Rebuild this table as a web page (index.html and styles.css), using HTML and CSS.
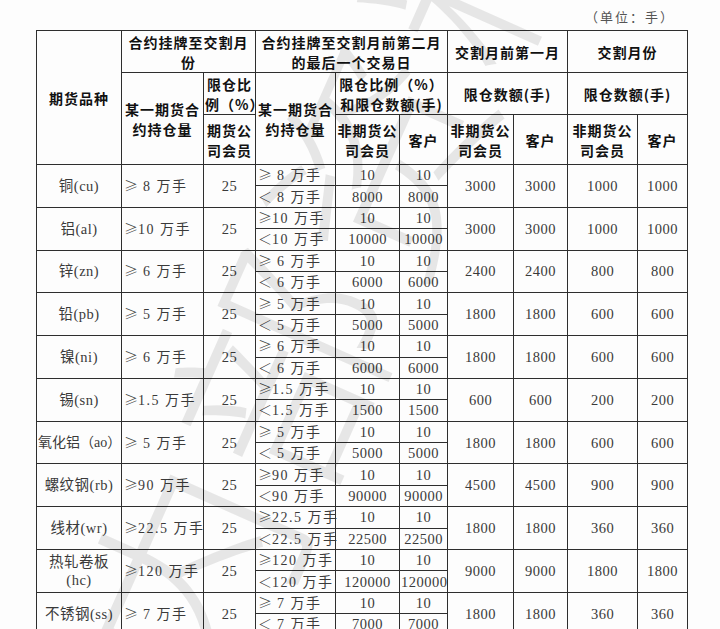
FILE: index.html
```html
<!DOCTYPE html>
<html lang="zh">
<head>
<meta charset="utf-8">
<link rel="stylesheet" href="styles.css">
</head>
<body>
<div class="page">
  <div class="unit">（单位：手）</div>
  <table class="limits">
    <colgroup>
      <col class="c1"><col class="c2"><col class="c3"><col class="c4"><col class="c5">
      <col class="c6"><col class="c7"><col class="c8"><col class="c9"><col class="c10">
    </colgroup>
    <thead>
      <tr class="h1">
        <th rowspan="3">期货品种</th>
        <th colspan="2">合约挂牌至交割月<br>份</th>
        <th colspan="3">合约挂牌至交割月前第二月<br>的最后一个交易日</th>
        <th colspan="2">交割月前第一月</th>
        <th colspan="2">交割月份</th>
      </tr>
      <tr class="h2">
        <th rowspan="2">某一期货合<br>约持仓量</th>
        <th>限仓比<br>例（%）</th>
        <th rowspan="2">某一期货合<br>约持仓量</th>
        <th colspan="2">限仓比例（%）<br>和限仓数额(手)</th>
        <th colspan="2">限仓数额(手)</th>
        <th colspan="2">限仓数额(手)</th>
      </tr>
      <tr class="h3">
        <th>期货公<br>司会员</th>
        <th>非期货公<br>司会员</th>
        <th>客户</th>
        <th>非期货公<br>司会员</th>
        <th>客户</th>
        <th>非期货公<br>司会员</th>
        <th>客户</th>
      </tr>
    </thead>
    <tbody>
      <tr><td rowspan="2">铜(cu)</td><td rowspan="2" class="l"><span class="op">≥</span> 8 万手</td><td rowspan="2">25</td><td class="l"><span class="op">≥</span> 8 万手</td><td>10</td><td>10</td><td rowspan="2">3000</td><td rowspan="2">3000</td><td rowspan="2">1000</td><td rowspan="2">1000</td></tr>
      <tr><td class="l"><span class="op">＜</span> 8 万手</td><td>8000</td><td>8000</td></tr>

      <tr><td rowspan="2">铝(al)</td><td rowspan="2" class="l"><span class="op">≥</span>10 万手</td><td rowspan="2">25</td><td class="l"><span class="op">≥</span>10 万手</td><td>10</td><td>10</td><td rowspan="2">3000</td><td rowspan="2">3000</td><td rowspan="2">1000</td><td rowspan="2">1000</td></tr>
      <tr><td class="l"><span class="op">＜</span>10 万手</td><td>10000</td><td>10000</td></tr>

      <tr><td rowspan="2">锌(zn)</td><td rowspan="2" class="l"><span class="op">≥</span> 6 万手</td><td rowspan="2">25</td><td class="l"><span class="op">≥</span> 6 万手</td><td>10</td><td>10</td><td rowspan="2">2400</td><td rowspan="2">2400</td><td rowspan="2">800</td><td rowspan="2">800</td></tr>
      <tr><td class="l"><span class="op">＜</span> 6 万手</td><td>6000</td><td>6000</td></tr>

      <tr><td rowspan="2">铅(pb)</td><td rowspan="2" class="l"><span class="op">≥</span> 5 万手</td><td rowspan="2">25</td><td class="l"><span class="op">≥</span> 5 万手</td><td>10</td><td>10</td><td rowspan="2">1800</td><td rowspan="2">1800</td><td rowspan="2">600</td><td rowspan="2">600</td></tr>
      <tr><td class="l"><span class="op">＜</span> 5 万手</td><td>5000</td><td>5000</td></tr>

      <tr><td rowspan="2">镍(ni)</td><td rowspan="2" class="l"><span class="op">≥</span> 6 万手</td><td rowspan="2">25</td><td class="l"><span class="op">≥</span> 6 万手</td><td>10</td><td>10</td><td rowspan="2">1800</td><td rowspan="2">1800</td><td rowspan="2">600</td><td rowspan="2">600</td></tr>
      <tr><td class="l"><span class="op">＜</span> 6 万手</td><td>6000</td><td>6000</td></tr>

      <tr><td rowspan="2">锡(sn)</td><td rowspan="2" class="l"><span class="op">≥</span>1.5 万手</td><td rowspan="2">25</td><td class="l"><span class="op">≥</span>1.5 万手</td><td>10</td><td>10</td><td rowspan="2">600</td><td rowspan="2">600</td><td rowspan="2">200</td><td rowspan="2">200</td></tr>
      <tr><td class="l"><span class="op">＜</span>1.5 万手</td><td>1500</td><td>1500</td></tr>

      <tr><td rowspan="2" class="tight">氧化铝（ao）</td><td rowspan="2" class="l"><span class="op">≥</span> 5 万手</td><td rowspan="2">25</td><td class="l"><span class="op">≥</span> 5 万手</td><td>10</td><td>10</td><td rowspan="2">1800</td><td rowspan="2">1800</td><td rowspan="2">600</td><td rowspan="2">600</td></tr>
      <tr><td class="l"><span class="op">＜</span> 5 万手</td><td>5000</td><td>5000</td></tr>

      <tr><td rowspan="2">螺纹钢(rb)</td><td rowspan="2" class="l"><span class="op">≥</span>90 万手</td><td rowspan="2">25</td><td class="l"><span class="op">≥</span>90 万手</td><td>10</td><td>10</td><td rowspan="2">4500</td><td rowspan="2">4500</td><td rowspan="2">900</td><td rowspan="2">900</td></tr>
      <tr><td class="l"><span class="op">＜</span>90 万手</td><td>90000</td><td>90000</td></tr>

      <tr><td rowspan="2">线材(wr)</td><td rowspan="2" class="l"><span class="op">≥</span>22.5 万手</td><td rowspan="2">25</td><td class="l"><span class="op">≥</span>22.5 万手</td><td>10</td><td>10</td><td rowspan="2">1800</td><td rowspan="2">1800</td><td rowspan="2">360</td><td rowspan="2">360</td></tr>
      <tr><td class="l"><span class="op">＜</span>22.5 万手</td><td>22500</td><td>22500</td></tr>

      <tr><td rowspan="2">热轧卷板<br>(hc)</td><td rowspan="2" class="l"><span class="op">≥</span>120 万手</td><td rowspan="2">25</td><td class="l"><span class="op">≥</span>120 万手</td><td>10</td><td>10</td><td rowspan="2">9000</td><td rowspan="2">9000</td><td rowspan="2">1800</td><td rowspan="2">1800</td></tr>
      <tr><td class="l"><span class="op">＜</span>120 万手</td><td>120000</td><td>120000</td></tr>

      <tr><td rowspan="2">不锈钢(ss)</td><td rowspan="2" class="l"><span class="op">≥</span> 7 万手</td><td rowspan="2">25</td><td class="l"><span class="op">≥</span> 7 万手</td><td>10</td><td>10</td><td rowspan="2">1800</td><td rowspan="2">1800</td><td rowspan="2">360</td><td rowspan="2">360</td></tr>
      <tr><td class="l"><span class="op">＜</span> 7 万手</td><td>7000</td><td>7000</td></tr>
    </tbody>
  </table>
  <div class="watermark">内部资料</div>
</div>
</body>
</html>
```
FILE: styles.css
```css
html, body {
  margin: 0;
  padding: 0;
  background: #fdfdfd;
}
body {
  font-family: "Liberation Serif", "Noto Sans CJK SC", serif;
  color: #3a3a3a;
  overflow: hidden;
}
.page {
  position: relative;
  width: 720px;
  height: 629px;
  overflow: hidden;
  padding: 8px 0 0 36px;
  box-sizing: border-box;
}
.unit {
  width: 651px;
  box-sizing: border-box;
  padding-right: 12px;
  height: 22px;
  text-align: right;
  font-size: 13px;
  line-height: 20px;
  color: #555;
  letter-spacing: 2px;
}
.limits {
  border-collapse: collapse;
  table-layout: fixed;
  width: 651px;
}
.c1 { width: 85px; }
.c2 { width: 82px; }
.c3 { width: 52px; }
.c4 { width: 80px; }
.c5 { width: 64px; }
.c6 { width: 48px; }
.c7 { width: 66px; }
.c8 { width: 54px; }
.c9 { width: 70px; }
.c10 { width: 50px; }
.limits th, .limits td {
  border: 1.5px solid #2e2e2e;
  padding: 0 1px;
  text-align: center;
  vertical-align: middle;
  white-space: nowrap;
}
.limits th {
  font-family: "Noto Sans CJK SC", sans-serif;
  font-weight: 700;
  font-size: 14px;
  line-height: 20px;
  letter-spacing: 1px;
  color: #111;
}
.h1 { height: 42px; }
.h2 { height: 42px; }
.h3 { height: 50px; }
.limits td {
  font-size: 14.5px;
  line-height: 18px;
  height: 20.4px;
  letter-spacing: 0.5px;
}
.limits td.l {
  text-align: left;
  padding-left: 2px;
  font-size: 14px;
  letter-spacing: 1.5px;
}
.op {
  font-family: "Noto Sans CJK SC", sans-serif;
  font-weight: 300;
  letter-spacing: 0;
}
.limits td.tight {
  letter-spacing: 0;
  font-size: 14px;
}
.watermark {
  position: absolute;
  left: -10px;
  top: 610px;
  font-family: "Noto Sans CJK SC", sans-serif;
  font-size: 220px;
  font-weight: 300;
  color: rgba(0, 0, 0, 0.09);
  transform: rotate(-66deg);
  transform-origin: left top;
  white-space: nowrap;
  pointer-events: none;
  letter-spacing: 10px;
}
```
